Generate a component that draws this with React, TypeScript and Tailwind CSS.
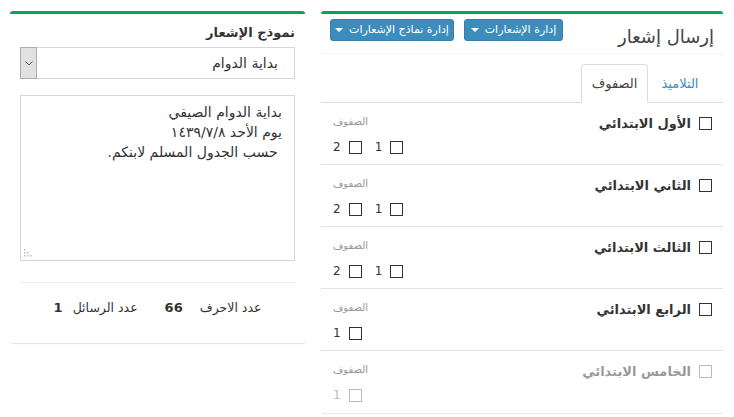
import React from "react";

function Box({ disabled }: { disabled?: boolean }) {
  return (
    <span
      className={`inline-block w-[13px] h-[13px] border bg-white shrink-0 ${
        disabled ? "border-[#bbb]" : "border-[#333]"
      }`}
    />
  );
}

function Caret() {
  return (
    <span className="inline-block w-0 h-0 border-l-[4px] border-r-[4px] border-t-[4px] border-l-transparent border-r-transparent border-t-white" />
  );
}

const rows: { name: string; classes: string[]; disabled?: boolean }[] = [
  { name: "الأول الابتدائي", classes: ["1", "2"] },
  { name: "الثاني الابتدائي", classes: ["1", "2"] },
  { name: "الثالث الابتدائي", classes: ["1", "2"] },
  { name: "الرابع الابتدائي", classes: ["1"] },
  { name: "الخامس الابتدائي", classes: ["1"], disabled: true },
];

export default function App() {
  return (
    <div
      dir="rtl"
      className="w-[734px] h-[417px] overflow-hidden bg-white text-[#333] font-['DejaVu_Sans',sans-serif] flex items-start gap-[16px] pr-[11px] pl-[10px] pt-[11px]"
    >
      {/* Right panel */}
      <div className="w-[402px] shrink-0 bg-white border-t-[3px] border-[#00a65a] rounded-[3px] shadow-[0_1px_1px_rgba(0,0,0,0.1)]">
        <div className="h-[40px] border-b border-[#f4f4f4] flex items-center justify-between pr-[9px] pl-[9px]">
          <h3 className="text-[18px] leading-none text-[#444] pt-[6px]">إرسال إشعار</h3>
          <div className="flex gap-[10px] self-start mt-[5px]">
            <button className="h-[22px] w-[99px] bg-[#3c8dbc] border border-[#367fa9] rounded-[3px] text-white text-[11px] flex items-center justify-center gap-[6px]">
              <span>إدارة الإشعارات</span>
              <Caret />
            </button>
            <button className="h-[22px] w-[124px] bg-[#3c8dbc] border border-[#367fa9] rounded-[3px] text-white text-[11px] flex items-center justify-center gap-[6px]">
              <span>إدارة نماذج الإشعارات</span>
              <Caret />
            </button>
          </div>
        </div>
        <div className="pt-[10px]">
          <div className="flex border-b border-[#ddd] pr-[11px] h-[39px]">
            <div className="w-[64px] h-[39px] flex items-center justify-center text-[13px] text-[#3c8dbc]">
              التلاميذ
            </div>
            <div className="w-[67px] h-[39px] flex items-center justify-center text-[13px] text-[#444] bg-white border border-[#ddd] border-b-white rounded-t-[4px]">
              الصفوف
            </div>
          </div>
          <div>
            {rows.map((r, i) => (
              <div
                key={i}
                className={`h-[62px] flex justify-between pr-[11px] pl-[12px] ${
                  i < rows.length - 1 ? "border-b border-[#e3e3e3]" : ""
                } ${r.disabled ? "text-[#999]" : ""}`}
              >
                <div className="flex items-start gap-[8px] pt-[14px]">
                  <Box disabled={r.disabled} />
                  <span
                    className={`text-[13px] leading-[14px] font-bold ${
                      r.disabled ? "text-[#999]" : "text-[#333]"
                    }`}
                  >
                    {r.name}
                  </span>
                </div>
                <div className="flex flex-col items-end pt-[13px]">
                  <span className="text-[10px] leading-[12px] text-[#999]">الصفوف</span>
                  <div className="flex gap-[13px] mt-[13px]">
                    {r.classes.map((c) => (
                      <div key={c} className="flex items-center gap-[8px]">
                        <Box disabled={r.disabled} />
                        <span className={`text-[12px] leading-[13px] ${r.disabled ? "text-[#bbb]" : "text-[#333]"}`}>
                          {c}
                        </span>
                      </div>
                    ))}
                  </div>
                </div>
              </div>
            ))}
          </div>
        </div>
      </div>

      {/* Left panel */}
      <div className="w-[295px] shrink-0 bg-white border-t-[3px] border-[#00a65a] rounded-[3px] shadow-[0_1px_1px_rgba(0,0,0,0.12)] px-[10px] pt-[10px]">
        <label className="block text-[13px] leading-[18px] font-bold text-[#333]">نموذج الإشعار</label>
        <div className="mt-[5px] h-[32px] border border-[#d2d6de] flex items-center justify-between">
          <span className="text-[14px] pr-[16px] text-[#333]">بداية الدوام</span>
          <div className="w-[17px] h-[32px] -ml-px bg-[#e1e1e1] border border-[#adadad] flex items-center justify-center">
            <svg width="8" height="5" viewBox="0 0 8 5">
              <path d="M0.5 0.5 L4 4 L7.5 0.5" fill="none" stroke="#555" strokeWidth="1" />
            </svg>
          </div>
        </div>
        <div className="relative mt-[16px] h-[166px] border border-[#d2d6de] pt-[6px] pr-[12px] text-[14px] leading-[20px] text-[#333] whitespace-pre">
          <div>بداية الدوام الصيفي</div>
          <div>يوم الأحد ١٤٣٩/٧/٨</div>
          <div> حسب الجدول المسلم لابنكم.</div>
          <svg className="absolute left-[3px] bottom-[3px]" width="8" height="8" viewBox="0 0 8 8">
            <g fill="#bbb">
              <rect x="0" y="0" width="1.5" height="1.5" />
              <rect x="0" y="3" width="1.5" height="1.5" />
              <rect x="3" y="3" width="1.5" height="1.5" />
              <rect x="0" y="6" width="1.5" height="1.5" />
              <rect x="3" y="6" width="1.5" height="1.5" />
              <rect x="6" y="6" width="1.5" height="1.5" />
            </g>
          </svg>
        </div>
        <div className="mt-[21px] border-t border-[#eee] h-[61px] flex items-center justify-center pb-[10px] text-[12.5px] text-[#333]">
          <span>عدد الاحرف</span>
          <span className="mr-[17px] font-bold text-[13px]">66</span>
          <span className="mr-[27px]">عدد الرسائل</span>
          <span className="mr-[10px] font-bold text-[13px]">1</span>
        </div>
      </div>
    </div>
  );
}
